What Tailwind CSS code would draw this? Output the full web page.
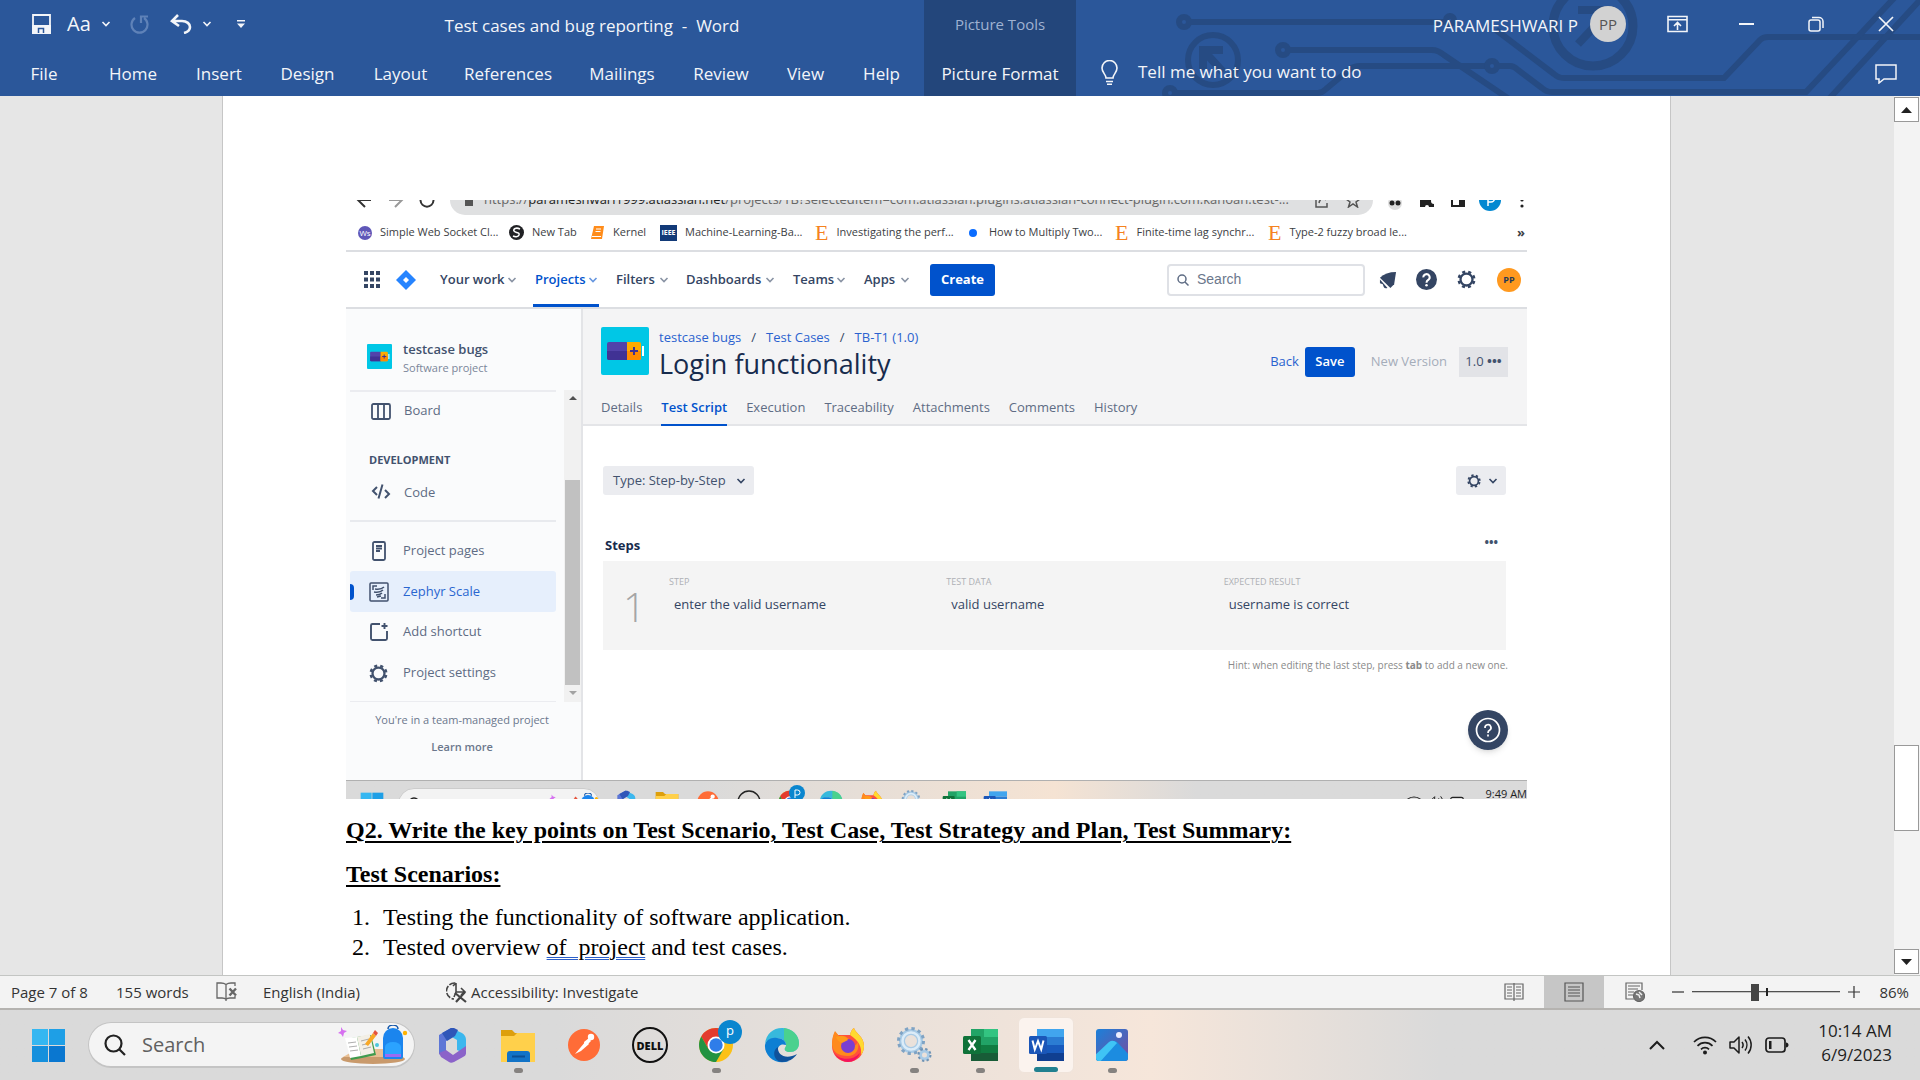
<!DOCTYPE html>
<html lang="en">
<head>
<meta charset="utf-8">
<title>Test cases and bug reporting - Word</title>
<script src="https://cdn.jsdelivr.net/npm/@tailwindcss/browser@4"></script>
</head>
<body class="flex h-screen flex-col overflow-hidden bg-[#e6e6e6] font-['Open_Sans','Noto_Sans',sans-serif] text-[16px] text-black">

<svg class="hidden" aria-hidden="true">
  <symbol id="chev" viewBox="0 0 10 10"><path d="M1.5 3l3.500 3.500L8.500 3" fill="none" stroke="currentColor" stroke-width="1.600"/></symbol>
  <symbol id="gear" viewBox="0 0 20 20"><circle cx="10" cy="10" r="6.300" fill="none" stroke="currentColor" stroke-width="2.400"/><circle cx="10" cy="10" r="8.200" fill="none" stroke="currentColor" stroke-width="2.600" stroke-dasharray="3.220 3.220" stroke-dashoffset="-1.600"/></symbol>
  <symbol id="battery" viewBox="0 0 48 48"><rect width="48" height="48" rx="2" fill="#00c7e6"/><rect x="6" y="15" width="21" height="18" rx="2" fill="#5243aa"/><path d="M6 24h21v9H8a2 2 0 0 1-2-2z" fill="#403294"/><path d="M26 15h12a2 2 0 0 1 2 2v14a2 2 0 0 1-2 2H26z" fill="#ffab00"/><path d="M26 24h14v7a2 2 0 0 1-2 2H26z" fill="#ff8b00"/><path d="M41 19h2v10h-2z" fill="#fff"/><path d="M33 20v8M29 24h8" stroke="#403294" stroke-width="2"/></symbol>
  <symbol id="edge" viewBox="0 0 36 36"><path d="M1 17C2 7 9 1 18 1c10 0 17 7 17 15 0 6-4 9-9 9-4 0-6-2-5-4 1-1 1-2 1-3 0-4-4-7-9-7C7 11 2 14 1 17z" fill="#37b9dc"/><path d="M20 1c9 1 15 8 15 15 0 6-4 9-9 9-4 0-6-2-5-4 2-3 1-6-1-8z" fill="#4fd77a" opacity=".8"/><path d="M1 18c1-5 6-8 12-7 5 0 9 3 9 7-6-2-9 2-8 7 1 6 6 9 11 9-13 5-25-5-24-16z" fill="#0d7fd3"/><path d="M14 20c-1 8 8 13 19 7-3 5-9 8-15 8-9-1-10-12-4-15z" fill="#10529b"/></symbol>
  <symbol id="office" viewBox="0 0 36 36"><path d="M17 1L5 8v19l7 4V14l9-6V2z" fill="#5c76d6"/><path d="M17 1l11 5c3 2 4 4 4 7v14l-9-4V13l-7-4z" fill="#3bb7ee"/><path d="M17 1L8 6l5 8 8-5 3-6-4-2z" fill="#2f56b8"/><path d="M5 26l7-3 7 5 13-9v7c0 2-1 3-3 4l-9 5c-2 1-4 1-5 0l-8-5z" fill="#8b63c9"/></symbol>
  <symbol id="folder" viewBox="0 0 36 36"><path d="M1 3h11l3 3h20v8H1z" fill="#dd9f0c"/><path d="M1 9h13l3-3h18v29H1z" fill="#ffd04b"/><path d="M7 35V27a3 3 0 0 1 3-3h17a3 3 0 0 1 3 3v8z" fill="#1173c7"/><path d="M12 29.500h13" stroke="#0a4f94" stroke-width="2"/></symbol>
  <symbol id="postman" viewBox="0 0 36 36"><circle cx="18" cy="18" r="16" fill="#ff6c37"/><path d="M9 27l11-13 3 3-8 7z" fill="#fff"/><circle cx="25" cy="10" r="3.200" fill="#fff"/><path d="M18 15l5-4 2 3-6 6z" fill="#fff"/></symbol>
  <symbol id="chrome" viewBox="0 0 36 36"><circle cx="18" cy="18" r="17" fill="#fbc116"/><path d="M18 1C12 1 6 4 3.300 9.500L10.600 22.300 18 10h15A17 17 0 0 0 18 1z" fill="#e33b2e"/><path d="M3.300 9.500A17 17 0 0 0 18 35l7.400-12.700H10.600z" fill="#229342"/><circle cx="18" cy="18" r="8.500" fill="#fff"/><circle cx="18" cy="18" r="6.700" fill="#2f7de9"/></symbol>
  <symbol id="firefox" viewBox="0 0 36 36"><path d="M20 8c1-4 2-6 4-7 1 5 10 8 10 18 0 9-7 16-16 16S2 28 2 19c0-6 1-10 3-14l3 3z" fill="#ff4f3d"/><path d="M20 8c1-4 2-6 4-7 1 5 10 8 10 18 0 4-1 6-3 9 1-8-2-14-11-20z" fill="#ffd930"/><path d="M2 18c0-6 1-10 3-14l4 5c4-1 7 0 10 3l-6 4c4 6 12 5 15-1 2 8-3 14-10 14C8 29 3 25 2 18z" fill="#ff8a1d"/><circle cx="18" cy="19" r="7" fill="#7a3fd1"/><path d="M6 10c5-2 10-1 12 3l-6 3c-3-1-5-3-6-6z" fill="#ff9a1a"/><path d="M3 24c4 9 19 11 27 2-2 6-7 9-12 9S6 31 3 24z" fill="#f4135f"/></symbol>
  <symbol id="gears" viewBox="0 0 36 36"><circle cx="15" cy="14" r="9" fill="none" stroke="#a9cbe6" stroke-width="6"/><circle cx="15" cy="14" r="12.500" fill="none" stroke="#7fa3c4" stroke-width="3" stroke-dasharray="3.300 3.250"/><circle cx="15" cy="14" r="8.500" fill="none" stroke="#dcecf8" stroke-width="2.500"/><circle cx="28.500" cy="28" r="4" fill="none" stroke="#a9cbe6" stroke-width="3"/><circle cx="28.500" cy="28" r="6" fill="none" stroke="#6f93b5" stroke-width="2" stroke-dasharray="2.350 2.360"/></symbol>
  <symbol id="excel" viewBox="0 0 36 36"><path d="M9 2h27v32H9z" fill="#21a366"/><path d="M22 2h14v8H22z" fill="#33c481"/><path d="M9 18h27v8H9z" fill="#107c41"/><path d="M9 26h27v8H9z" fill="#185c37"/><rect x="1" y="9" width="18" height="18" rx="1.500" fill="#0f7239"/><path d="M6.500 13l7 10M13.500 13l-7 10" stroke="#fff" stroke-width="2.300"/></symbol>
  <symbol id="word" viewBox="0 0 36 36"><path d="M9 2h27v8H9z" fill="#41a5ee"/><path d="M9 10h27v8H9z" fill="#2b7cd3"/><path d="M9 18h27v8H9z" fill="#185abd"/><path d="M9 26h27v8H9z" fill="#103f91"/><rect x="1" y="9" width="18" height="18" rx="1.500" fill="#1b56b8"/><path d="M4.500 13.500l2.300 9L10 14l3.200 8.500 2.300-9" fill="none" stroke="#fff" stroke-width="2"/></symbol>
  <symbol id="win" viewBox="0 0 36 36"><path d="M1 1h16.500v16.500H1z" fill="#35b7f1"/><path d="M18.500 1H35v16.500H18.500z" fill="#1e9fe6"/><path d="M1 18.500h16.500V35H1z" fill="#1590dd"/><path d="M18.500 18.500H35V35H18.500z" fill="#0a77d0"/></symbol>
  <symbol id="pack" viewBox="0 0 70 40"><ellipse cx="35" cy="34" rx="32" ry="5" fill="#c99a6c"/><path d="M5 32l14-8h32l14 8z" fill="#e8bf94"/><path d="M8 14l11-2 14-2 5 20-14 3-11 2z" fill="#3f9b4d"/><path d="M7 13l12-1 4 19-11 2z" fill="#fff"/><path d="M19 12l13-3 4 19-13 3z" fill="#f3efe6"/><path d="M10 18l8-1M11 22l8-1M12 26l8-1M23 16l8-2M24 20l8-2M25 24l8-2" stroke="#999" stroke-width=".8"/><path d="M27 19l8-11 3 3-8 10z" fill="#f9a825"/><path d="M35 8l2-3 3 3-2 3z" fill="#e5533d"/><path d="M3 2l2 3 4 1-3 2-1 4-2-3-3-1 3-2z" fill="#d670f0"/><path d="M50 4a5 4 0 0 1 10 0" fill="none" stroke="#1355a8" stroke-width="1.500"/><path d="M45 13a10 10 0 0 1 20 0v19a2 2 0 0 1-2 2H47a2 2 0 0 1-2-2z" fill="#1b85ee"/><path d="M47 22a8 5 0 0 1 16 0v9H47z" fill="#2ba3ff"/><path d="M47 29h16v3H47z" fill="#9b6bf2"/><circle cx="67" cy="8" r="2.200" fill="#ffb300"/><circle cx="39" cy="20" r="2" fill="#4cc6dd"/></symbol>
  <symbol id="wifi" viewBox="0 0 24 24"><g fill="none" stroke="currentColor" stroke-width="1.700"><path d="M1 9a15.500 15.500 0 0 1 22 0M4.500 12.800a10.600 10.600 0 0 1 15 0M8 16.300a5.700 5.700 0 0 1 8 0"/></g><circle cx="12" cy="19.500" r="2" fill="currentColor"/></symbol>
  <symbol id="sound" viewBox="0 0 24 24"><g fill="none" stroke="currentColor" stroke-width="1.500"><path d="M1 9h4l5-5v16l-5-5H1z" stroke-linejoin="round"/><path d="M13 9a5 5 0 0 1 0 6M16 6.500a9 9 0 0 1 0 11M19 3.500a13 13 0 0 1 0 17"/></g></symbol>
  <symbol id="power" viewBox="0 0 24 24"><rect x="1" y="5" width="19" height="14" rx="3" fill="none" stroke="currentColor" stroke-width="1.700"/><path d="M4 8h2.500v8H4z" fill="currentColor"/><path d="M21 9.500c1.500 0 2.500 1 2.500 2.500s-1 2.500-2.500 2.500z" fill="currentColor"/></symbol>
</svg>

<!-- Title bar and ribbon tabs -->
<header class="relative flex h-[96px] shrink-0 flex-col overflow-hidden bg-[#2b579a] text-[#f3f5f9]">
  <svg class="absolute top-0 right-0 h-[96px] w-[760px]" viewBox="1160 0 760 96" fill="none" stroke="#264b83" stroke-width="6" aria-hidden="true">
    <circle cx="1184" cy="22" r="5"/><path d="M1190 22H1444"/><circle cx="1450" cy="20" r="4"/>
    <path d="M1496 30l58 44q4 4 10 4h160l36-38q3-3 8-3h152"/>
    <circle cx="1283" cy="50" r="5"/><path d="M1289 50h143q6 0 12 5l68 46"/>
    <circle cx="1170" cy="93" r="5"/><path d="M1176 93h142q4 0 8-4l24-20q4-3 10-3h126"/><circle cx="1492" cy="66" r="5"/>
    <path d="M1498 66h12q4 0 8 4l24 18q4 4 10 4h254l90-96M1828 100l92-100"/>
    <circle cx="1213" cy="60" r="25"/><circle cx="1593" cy="26" r="40" stroke-width="9"/>
    <path d="M1203 70V50h20M1203 50l20 22M1578 10h32v30M1610 10l-32 34" stroke-width="8"/>
  </svg>
  <div class="relative flex h-[52px] items-stretch">
    <div class="flex flex-1 items-stretch">
      <div class="flex w-[260px] items-center pb-1 pl-8">
        <button class="w-[35px]" aria-label="Save"><svg class="h-5 w-[19px]" viewBox="0 0 19 20" fill="none" stroke="currentColor" stroke-width="1.800"><path d="M1 1h17v18H1z"/><path d="M1 12h17v7H1z" fill="currentColor"/><path d="M6.500 19v-4.500h5V19" stroke="#2b579a" stroke-width="1.500"/></svg></button>
        <button class="w-[34px] text-left text-[20px] leading-6">Aa</button>
        <button class="w-[29px]" aria-label="Font options"><svg class="size-[10px]"><use href="#chev"/></svg></button>
        <button class="w-10 text-[#5f82b8]" aria-label="Redo"><svg class="size-5" viewBox="0 0 20 20" fill="none" stroke="currentColor" stroke-width="2.200"><path d="M5 4a8 8 0 1 0 9 0M11 9V2.500h7"/></svg></button>
        <button class="w-[32px]" aria-label="Undo"><svg class="h-5 w-[22px]" viewBox="0 0 22 20" fill="none" stroke="currentColor" stroke-width="2.600"><path d="M8 1L2 7l7 5M3 7h9c5 0 8 3 8 6s-2 5-6 6"/></svg></button>
        <button class="w-[34px]" aria-label="Undo history"><svg class="size-[10px]"><use href="#chev"/></svg></button>
        <button aria-label="Customize quick access"><svg class="size-[10px]" viewBox="0 0 10 10" fill="currentColor"><path d="M1 1h8v1.500H1zM1 4.500h8L5 9z"/></svg></button>
      </div>
      <h1 class="flex flex-1 items-center justify-center text-[17px] whitespace-pre">Test cases and bug reporting  -  Word</h1>
    </div>
    <div class="flex w-[152px] items-center justify-center bg-[#23467b] pb-1 text-[15px] text-[#9fb2d2]">Picture Tools</div>
    <div class="flex w-[844px] items-center justify-end pb-1">
      <span class="mr-3 pt-1 text-[17px]">PARAMESHWARI P</span>
      <span class="flex size-9 items-center justify-center rounded-full bg-[#d2d2d2] text-[15px] text-[#555]">PP</span>
      <button class="ml-[41px] w-[71px]" aria-label="Ribbon display options"><svg class="h-[18px] w-[21px]" viewBox="0 0 21 18" fill="none" stroke="currentColor" stroke-width="1.600"><path d="M1 1.500h19v15H1zM1 4.800h19M10.500 15V8M7 11l3.500-3.500L14 11"/></svg></button>
      <button class="w-[70px]" aria-label="Minimize"><svg class="h-4 w-[17px]" viewBox="0 0 17 16" stroke="currentColor" stroke-width="2"><path d="M1 8h15"/></svg></button>
      <button class="w-[70px]" aria-label="Restore"><svg class="size-4" viewBox="0 0 16 16" fill="none" stroke="currentColor" stroke-width="1.500"><rect x="1" y="4" width="11" height="11" rx="2"/><path d="M4 1.500h7a4 4 0 0 1 4 4V12"/></svg></button>
      <button class="mr-[26px]" aria-label="Close"><svg class="size-4" viewBox="0 0 16 16" stroke="currentColor" stroke-width="1.700"><path d="M1 1l14 14M15 1L1 15"/></svg></button>
    </div>
  </div>
  <nav class="relative flex h-[44px] items-stretch text-[17px]">
    <button class="w-[88px] pb-px">File</button>
    <button class="w-[90px] pb-px">Home</button>
    <button class="w-[82px] pb-px">Insert</button>
    <button class="w-[95px] pb-px">Design</button>
    <button class="w-[91px] pb-px">Layout</button>
    <button class="w-[124px] pb-px">References</button>
    <button class="w-[104px] pb-px">Mailings</button>
    <button class="w-[94px] pb-px">Review</button>
    <button class="w-[75px] pb-px">View</button>
    <button class="w-[81px] pr-1 pb-px">Help</button>
    <button class="w-[152px] bg-[#23467b] pb-px">Picture Format</button>
    <button class="flex items-center gap-5 pb-1 pl-[25px]"><svg class="h-[25px] w-[17px]" viewBox="0 0 17 25" fill="none" stroke="currentColor" stroke-width="1.600"><path d="M5 18c0-4-4-5-4-10a7.500 7.500 0 0 1 15 0c0 5-4 6-4 10zM5 21.500h7M6 24.200h5"/></svg>Tell me what you want to do</button>
    <button class="mr-[23px] ml-auto" aria-label="Comments"><svg class="h-5 w-[22px]" viewBox="0 0 22 20" fill="none" stroke="currentColor" stroke-width="1.500"><path d="M1 1h20v14H9l-5 4v-4H1z"/></svg></button>
  </nav>
</header>

<!-- Document area -->
<main class="flex min-h-0 flex-1">
  <div class="min-w-0 flex-1 overflow-hidden pr-[223px] pl-[222px]">
    <article class="h-full border-x border-[#c6c6c6] bg-white pt-[104px] pr-[143px] pl-[123px] font-['Liberation_Serif',serif]">

      <!-- Embedded browser capture -->
      <section class="flex h-[599px] flex-col overflow-hidden font-['Open_Sans','Noto_Sans',sans-serif] text-[13px] text-[#42526e]">
        <div class="flex h-[15px] shrink-0 items-end overflow-hidden pl-[10px] text-[#333]">
          <svg class="h-[30px] w-[94px] shrink-0" viewBox="0 0 94 30" fill="none" stroke="#333" stroke-width="2"><path d="M2 15h13M9 8l-7 7 7 7"/><path d="M33 15h12M39 8l7 7-7 7" stroke="#999"/><path d="M66 11a6.500 6.500 0 1 0 10 0"/></svg>
          <div class="flex h-[30px] flex-1 items-center overflow-hidden rounded-full bg-[#dfe0e1] pl-[15px] text-[#666]">
            <span class="mr-[11px] h-3 w-2 shrink-0 bg-[#555]"></span>
            <span class="flex-1 whitespace-nowrap text-[13px]">https://<span class="text-[#222]">parameshwari1999.atlassian.net</span>/projects/TB?selectedItem=com.atlassian.plugins.atlassian-connect-plugin.com.kanoah.test-...</span>
            <svg class="mr-3 h-4 w-[46px] shrink-0" viewBox="0 0 46 16" fill="none" stroke="#555" stroke-width="1.500"><path d="M1 4v11h11v-4M4 11c1-5 4-6 8-6M10 2l3 3-3 3"/><path d="M38 2l2 4.500 5 .5-4 3 1.500 5-4.500-3-4.500 3L35 10l-4-3 5-.5z"/></svg>
          </div>
          <svg class="h-[30px] w-[154px] shrink-0" viewBox="0 0 154 30"><circle cx="22" cy="18" r="7" fill="#ddd"/><circle cx="19" cy="18" r="2.500" fill="#222"/><circle cx="25" cy="18" r="2.500" fill="#222"/><path d="M47 9h4a3 3 0 0 1 6 0h4v4a3 3 0 0 0 0 6v3h-5a2 2 0 0 0-4 0h-5z" fill="#222"/><path d="M79 8h12v13H79z" fill="none" stroke="#222" stroke-width="2"/><path d="M86 8h5v13h-5z" fill="#222"/><circle cx="117" cy="15" r="11" fill="#0288d1"/><path d="M115 21V10h3a3 3 0 0 1 0 7h-3" fill="none" stroke="#fff" stroke-width="1.500"/><circle cx="149" cy="15" r="1.600" fill="#222"/><circle cx="149" cy="21" r="1.600" fill="#222"/></svg>
        </div>
        <nav class="flex h-[35px] shrink-0 items-center text-[11px] text-[#3c4043]">
          <a href="#" class="flex w-[154px] items-center gap-2 pl-3"><span class="size-[14px] rounded-full bg-[#5f57b8] text-center text-[8px] leading-[14px] text-white">Ws</span>Simple Web Socket Cl...</a>
          <a href="#" class="flex w-[81px] items-center gap-2 pl-[9px]"><svg class="size-[15px]" viewBox="0 0 15 15"><circle cx="7.500" cy="7.500" r="7.500" fill="#202124"/><path d="M11 4c-4-2-7 0-6 2s6 1 5 4c-1 2-4 2-6 1" fill="none" stroke="#fff" stroke-width="1.600"/></svg>New Tab</a>
          <a href="#" class="flex w-[71px] items-center gap-2 pl-[9px]"><svg class="size-[15px]" viewBox="0 0 15 15"><path d="M4 1h10l-2 13H1z" fill="#ff8c1a"/><path d="M6 4h5M5.500 6.500h5M2 11.500h9" stroke="#fff"/></svg>Kernel</a>
          <a href="#" class="flex w-[153px] items-center gap-2 pl-2"><span class="h-4 w-[17px] bg-[#123a78] text-center text-[7px] leading-4 font-bold text-white">IEEE</span>Machine-Learning-Ba...</a>
          <a href="#" class="flex w-[157px] items-center gap-2 pl-[10px]"><span class="font-['Liberation_Serif',serif] text-[22px] leading-5 text-[#f58220]">E</span>Investigating the perf...</a>
          <a href="#" class="flex w-[144px] items-center gap-3 pl-[7px]"><span class="size-2 rounded-full bg-[#0a6cff]"></span>How to Multiply Two...</a>
          <a href="#" class="flex w-[153px] items-center gap-2 pl-[9px]"><span class="font-['Liberation_Serif',serif] text-[22px] leading-5 text-[#f58220]">E</span>Finite-time lag synchr...</a>
          <a href="#" class="flex items-center gap-2 pl-[9px]"><span class="font-['Liberation_Serif',serif] text-[22px] leading-5 text-[#f58220]">E</span>Type-2 fuzzy broad le...</a>
          <span class="ml-auto pr-[2px] text-[13px] font-bold">»</span>
        </nav>

        <div class="flex h-[59px] shrink-0 items-stretch border-t-2 border-b-2 border-[#dcdee2] text-[13px] font-semibold text-[#344563]">
          <div class="flex w-[94px] items-center gap-4 pl-[18px]">
            <svg class="h-[17px] w-4" viewBox="0 0 16 17" fill="#344563"><path d="M0 0h4v4H0zM6 0h4v4H6zM12 0h4v4h-4zM0 6.500h4v4H0zM6 6.500h4v4H6zM12 6.500h4v4h-4zM0 13h4v4H0zM6 13h4v4H6zM12 13h4v4h-4z"/></svg>
            <svg class="size-5" viewBox="0 0 20 20"><path d="M10 0l10 10-10 10L0 10z" fill="#2684ff"/><path d="M10 7l3 3-3 3-3-3z" fill="#fff"/></svg>
          </div>
          <a href="#" class="flex w-[93px] items-center justify-between pr-4"><span>Your work</span><svg class="size-[10px] text-[#8993a4]"><use href="#chev"/></svg></a>
          <a href="#" class="flex w-[66px] items-center justify-between border-b-3 border-[#0052cc] pt-[3px] pr-[1px] pl-[2px] text-[#0052cc]"><span>Projects</span><svg class="size-[10px] opacity-60"><use href="#chev"/></svg></a>
          <a href="#" class="ml-[17px] flex w-[53px] items-center justify-between"><span>Filters</span><svg class="size-[10px] text-[#8993a4]"><use href="#chev"/></svg></a>
          <a href="#" class="ml-[17px] flex w-[89px] items-center justify-between"><span>Dashboards</span><svg class="size-[10px] text-[#8993a4]"><use href="#chev"/></svg></a>
          <a href="#" class="ml-[18px] flex w-[53px] items-center justify-between"><span>Teams</span><svg class="size-[10px] text-[#8993a4]"><use href="#chev"/></svg></a>
          <a href="#" class="ml-[18px] flex w-[46px] items-center justify-between"><span>Apps</span><svg class="size-[10px] text-[#8993a4]"><use href="#chev"/></svg></a>
          <button class="ml-5 h-8 w-[65px] self-center rounded-[3px] bg-[#0052cc] font-bold text-white">Create</button>
          <label class="mr-[14px] ml-auto flex h-8 w-[198px] items-center gap-2 self-center rounded-[4px] border-2 border-[#dfe1e6] pl-2 font-normal"><svg class="size-3" viewBox="0 0 12 12" fill="none" stroke="#5e6c84" stroke-width="1.500"><circle cx="5" cy="5" r="4"/><path d="M8 8l3.500 3.500"/></svg><input type="text" aria-label="Search" placeholder="Search" class="w-32 font-['Liberation_Sans',sans-serif] text-[14px] outline-none placeholder:text-[#6b778c]"></label>
          <svg class="mr-[19px] size-[18px] self-center" viewBox="0 0 19 19" fill="#344563"><path d="M18 1L16 14l-4 4L1 7q6-6 17-6z"/><path d="M1 9l8 9q-3 1-4-1l-1-3-3-1z"/></svg>
          <svg class="mr-5 size-[21px] self-center" viewBox="0 0 20 20"><circle cx="10" cy="10" r="10" fill="#344563"/><path d="M7 8a3 3 0 1 1 4.500 2.500Q10 11.200 10 13" fill="none" stroke="#fff" stroke-width="1.900"/><circle cx="10" cy="15.500" r="1.200" fill="#fff"/></svg>
          <svg class="mr-[21px] size-[19px] self-center text-[#344563]"><use href="#gear"/></svg>
          <span class="mr-[6px] flex size-6 items-center justify-center self-center rounded-full bg-[#ff991f] text-[9px] font-bold text-[#253858]">PP</span>
        </div>

        <div class="flex h-[471px] shrink-0 items-stretch">
          <aside class="flex w-[237px] flex-col border-r-2 border-[#e3e4e7] bg-[#fafbfc]">
            <div class="mr-[25px] ml-1 flex h-[83px] items-center gap-[11px] border-b-2 border-[#ebecf0] pt-[14px] pl-[17px]">
              <svg class="size-[25px]"><use href="#battery"/></svg>
              <div class="pt-[2px]"><p class="text-[13px] leading-5 font-semibold">testcase bugs</p><p class="text-[11px] leading-[18px] text-[#7a869a]">Software project</p></div>
            </div>
            <div class="-mt-[2px] flex h-[312px] items-stretch">
              <ul class="flex w-[210px] flex-col pl-1 text-[13px] text-[#5e6c84]">
                <li><a href="#" class="flex h-[42px] items-center gap-[13px] pl-[21px]"><svg class="h-[17px] w-5" viewBox="0 0 20 17" fill="none" stroke="#42526e" stroke-width="1.800"><rect x="1" y="1" width="18" height="15" rx="1.500"/><path d="M7 1v15M13 1v15"/></svg>Board</a></li>
                <li class="flex h-[42px] items-end pb-1 pl-[19px] text-[11px] leading-5 font-bold text-[#42526e]">DEVELOPMENT</li>
                <li><a href="#" class="flex h-[46px] items-start gap-[13px] pt-[9px] pl-[21px] leading-[18px]"><svg class="h-[18px] w-5" viewBox="0 0 20 18" fill="none" stroke="#42526e" stroke-width="2"><path d="M6 4L2 8l4 4M14 7l4 4-4 4M11.500 1.500l-4 14"/></svg>Code</a></li>
                <li class="border-t-2 border-[#e8eaee]"><a href="#" class="flex h-[49px] items-center gap-[17px] pt-[9px] pl-[22px]"><svg class="h-5 w-[14px]" viewBox="0 0 14 20" fill="none" stroke="#42526e" stroke-width="1.800"><rect x="1" y="1" width="12" height="18" rx="1.500"/><path d="M4 5h6M4 7.500h6M4 10h4"/></svg>Project pages</a></li>
                <li><a href="#" class="flex h-[41px] items-center rounded-[3px] bg-[#e6effc] text-[#2a66d0]"><span class="h-4 w-1 rounded-r-sm bg-[#0052cc]"></span><svg class="mr-[14px] ml-[15px] size-5" viewBox="0 0 20 20" fill="none" stroke="#42526e" stroke-width="1.500"><rect x="1" y="1" width="18" height="18" rx="1"/><path d="M4 8V4h4M16 12v4h-4M15 5q-3 3-9 2M14 8q-3 3-9 2M13 11q-2 2-6 2M12 14l-4 1"/></svg>Zephyr Scale</a></li>
                <li><a href="#" class="flex h-10 items-center gap-[15px] pl-[20px]"><svg class="size-[18px]" viewBox="0 0 18 18" fill="none" stroke="#42526e" stroke-width="1.900"><path d="M10 1H2.500A1.500 1.500 0 0 0 1 2.500v13A1.500 1.500 0 0 0 2.500 17h13a1.500 1.500 0 0 0 1.500-1.500V8M14.500 0v6M11.500 3h6"/></svg>Add shortcut</a></li>
                <li><a href="#" class="flex h-[42px] items-center gap-[15px] pl-[19px]"><svg class="size-[19px] text-[#42526e]"><use href="#gear"/></svg>Project settings</a></li>
                <li class="grow border-b border-[#ebecf0]"></li>
              </ul>
              <div class="ml-2 flex w-[17px] flex-col items-center bg-[#f1f1f1]">
                <svg class="my-[6px] h-1 w-[8px]" viewBox="0 0 8 4"><path d="M0 4l4-4 4 4z" fill="#505050"/></svg>
                <div class="mt-[74px] h-[205px] w-[15px] bg-[#c1c1c1]"></div>
                <svg class="mt-[6px] h-1 w-[8px]" viewBox="0 0 8 4"><path d="M0 0l4 4 4-4z" fill="#a3a3a3"/></svg>
              </div>
            </div>
            <div class="flex flex-col items-center pt-1 pr-[3px] text-[11px] text-[#6b778c]">
              <p class="leading-7">You're in a team-managed project</p>
              <a href="#" class="leading-[26px] font-semibold">Learn more</a>
            </div>
          </aside>

          <div class="flex min-w-0 flex-1 flex-col bg-white">
            <div class="flex h-[117px] flex-col justify-between border-b-2 border-[#e4e5e8] bg-[#f4f4f5] pl-[18px]">
              <div class="flex pt-[18px] pr-[19px]">
                <svg class="mr-[10px] size-12 shrink-0"><use href="#battery"/></svg>
                <div>
                  <p class="flex gap-[10px] text-[13px] leading-5 text-[#2a62cf]"><a href="#">testcase bugs</a><span class="text-[#344563]">/</span><a href="#">Test Cases</a><span class="text-[#344563]">/</span><a href="#">TB-T1 (1.0)</a></p>
                  <h2 class="text-[27px] leading-[34px] font-medium text-[#172b4d]">Login functionality</h2>
                </div>
                <div class="mt-5 ml-auto flex h-[30px] items-stretch text-[13px]">
                  <a href="#" class="mr-[6px] self-center text-[#2a62cf]">Back</a>
                  <button class="mr-4 w-[50px] rounded-[3px] bg-[#0052cc] font-semibold text-white">Save</button>
                  <button class="mr-3 text-[#a5adba]" disabled>New Version</button>
                  <button class="w-[49px] bg-[#e2e3e7]">1.0 <b>•••</b></button>
                </div>
              </div>
              <div class="-mb-[2px] flex items-stretch gap-[19px] text-[13px] leading-[34px] text-[#5e6c84]">
                <a href="#">Details</a>
                <a href="#" class="border-b-2 border-[#0052cc] font-semibold text-[#0052cc]">Test Script</a>
                <a href="#">Execution</a>
                <a href="#">Traceability</a>
                <a href="#">Attachments</a>
                <a href="#">Comments</a>
                <a href="#">History</a>
              </div>
            </div>
            <div class="flex flex-col pt-[40px] pr-[21px] pl-5">
              <div class="flex h-[29px] items-stretch justify-between">
                <button class="flex w-[151px] items-center justify-between rounded-[3px] bg-[#ebecf0] pr-2 pl-[10px]">Type: Step-by-Step <svg class="size-[10px] text-[#344563]"><use href="#chev"/></svg></button>
                <button class="flex w-[50px] items-center justify-between rounded-[3px] bg-[#ebecf0] pr-2 pl-[11px] text-[#344563]" aria-label="Settings"><svg class="size-[14px]"><use href="#gear"/></svg><svg class="size-[10px]"><use href="#chev"/></svg></button>
              </div>
              <div class="mt-10 flex h-[26px] items-start justify-between pr-2 pl-[2px] leading-5"><h3 class="text-[13px] font-bold text-[#172b4d]">Steps</h3><span class="text-[12px] leading-4 font-bold">•••</span></div>
              <div class="flex h-[89px] bg-[#f4f4f4] pt-[14px] pr-[5px] text-[13px] text-[#344563]">
                <span class="w-[66px] pt-[10px] pl-5 text-[40px] leading-[44px] font-light text-[#a5a5a5]">1</span>
                <dl class="grid flex-1 grid-cols-3 leading-[14px]">
                  <div><dt class="text-[9px] text-[#aeb0b4]">STEP</dt><dd class="pt-[5px] pl-[5px] leading-5">enter the valid username</dd></div>
                  <div><dt class="text-[9px] text-[#aeb0b4]">TEST DATA</dt><dd class="pt-[5px] pl-[5px] leading-5">valid username</dd></div>
                  <div><dt class="text-[9px] text-[#aeb0b4]">EXPECTED RESULT</dt><dd class="pt-[5px] pl-[5px] leading-5">username is correct</dd></div>
                </dl>
              </div>
              <p class="-mr-[2px] pt-[5px] text-right text-[10px] leading-5 text-[#8a8a8a]">Hint: when editing the last step, press <b>tab</b> to add a new one.</p>
              <button class="-mr-[2px] mt-[35px] self-end rounded-full shadow-md" aria-label="Help"><svg class="size-10" viewBox="0 0 40 40" fill="none" stroke="#fff" stroke-width="1.700"><circle cx="20" cy="20" r="20" fill="#344563" stroke="none"/><circle cx="20" cy="20" r="11.500"/><path d="M17 18a3 3 0 1 1 4.500 2.300Q20 21 20 23M20 24.500v2"/></svg></button>
            </div>
          </div>
        </div>

        <div class="flex h-[19px] shrink-0 items-start overflow-hidden border-t border-[#b0b0b0] bg-linear-to-r from-[#dadada] from-30% via-[#f5e3d3] via-60% to-[#dadada] to-72% text-[#222]">
          <svg class="mt-[11px] ml-[14px] size-6 shrink-0"><use href="#win"/></svg>
          <div class="mt-[7px] ml-[14px] flex h-8 w-[202px] shrink-0 items-start rounded-full border border-[#ccc] bg-[#f3f3f3] pt-[8px] pl-2"><svg class="mr-2 size-4 shrink-0" viewBox="0 0 16 16" fill="none" stroke="#222" stroke-width="1.500"><circle cx="7" cy="6" r="5"/></svg><span class="text-[12px] leading-4 text-[#555]">Search</span><svg class="-mt-1 ml-auto h-7 w-[50px]"><use href="#pack"/></svg></div>
          <div class="mt-[9px] ml-[14px] flex shrink-0 gap-[17px]">
            <svg class="size-6"><use href="#office"/></svg><svg class="size-6"><use href="#folder"/></svg><svg class="size-6"><use href="#postman"/></svg><svg class="size-6" viewBox="0 0 24 24"><circle cx="12" cy="12" r="11" fill="none" stroke="#222" stroke-width="1.500"/></svg><svg class="size-6 overflow-visible" viewBox="0 0 24 24"><use href="#chrome" width="24" height="24"/><circle cx="19" cy="3" r="8" fill="#0a86cf"/><path d="M17 8V0h2.500a2 2 0 0 1 0 5H17" fill="none" stroke="#fff"/></svg><svg class="size-6"><use href="#edge"/></svg><svg class="size-6"><use href="#firefox"/></svg><svg class="size-6"><use href="#gears"/></svg><svg class="size-6"><use href="#excel"/></svg><svg class="size-6"><use href="#word"/></svg>
          </div>
          <div class="mt-[13px] ml-auto flex gap-[6px]"><svg class="size-4"><use href="#wifi"/></svg><svg class="size-4"><use href="#sound"/></svg><svg class="size-4"><use href="#power"/></svg></div>
          <span class="mt-[5px] ml-[20px] text-[11px] leading-4">9:49 AM</span>
        </div>
      </section>

      <h2 class="pt-[15px] text-[24px] leading-8 font-bold underline decoration-2 underline-offset-[3px]">Q2. Write the key points on Test Scenario, Test Case, Test Strategy and Plan, Test Summary:</h2>
      <h2 class="pt-3 text-[24px] leading-8 font-bold underline decoration-2 underline-offset-[3px]">Test Scenarios:</h2>
      <ol class="pt-3 pl-[6px] text-[24px] leading-[30px]">
        <li class="flex"><span class="w-[31px]">1.</span><span>Testing the functionality of software application.</span></li>
        <li class="flex"><span class="w-[31px]">2.</span><span>Tested overview <span class="whitespace-pre underline decoration-[#2b5fc9] decoration-double decoration-1 underline-offset-2">of  project</span> and test cases.</span></li>
      </ol>
    </article>
  </div>

  <div class="flex w-[26px] flex-col bg-[#f3f3f3] pr-[1px]">
    <button class="mt-[1px] flex h-[25px] items-center justify-center border border-[#999] bg-white" aria-label="Scroll up"><svg class="h-[6px] w-[11px]" viewBox="0 0 11 6"><path d="M0 6l5.500-6L11 6z" fill="#222"/></svg></button>
    <div class="grow-[623]"></div>
    <div class="h-[86px] border border-[#999] bg-white"></div>
    <div class="grow-[118]"></div>
    <button class="mb-[1px] flex h-[25px] items-center justify-center border border-[#999] bg-white" aria-label="Scroll down"><svg class="h-[6px] w-[11px]" viewBox="0 0 11 6"><path d="M0 0l5.500 6L11 0z" fill="#222"/></svg></button>
  </div>
</main>

<!-- Status bar -->
<div class="flex h-[33px] shrink-0 items-stretch border-t border-[#c3c5c3] bg-[#f3f3f3] text-[15px] text-[#333]">
  <button class="w-[105px] pl-[11px] text-left">Page 7 of 8</button>
  <button class="w-[111px] pl-[11px] text-left">155 words</button>
  <button class="w-[47px]" aria-label="Proofing"><svg class="h-5 w-[22px]" viewBox="0 0 22 20" fill="none" stroke="#666" stroke-width="1.300"><path d="M10 2.500Q8 1 5 1H1v15h5q3 0 4 1.500Q11 16 14 16h5v-2M10 2.500V19M10 2.500Q12 1 15 1h4v3"/><path d="M13.500 6.500l6.500 7M20 6.500l-6.500 7" stroke-width="2.400"/></svg></button>
  <button class="w-[183px] text-left">English (India)</button>
  <button class="flex items-center gap-[3px]"><svg class="h-[22px] w-[22px]" viewBox="0 0 22 22" fill="none" stroke="#444" stroke-width="1.600"><path d="M9 2a8 8 0 0 0-1 16" stroke-dasharray="6 1.500"/><path d="M10 2v9h8M7 5l3-3M15 7l4 4-4 3M10 11l-2 5"/><path d="M9 12l11 9M19 11l-9 10" stroke-width="2.200"/></svg>Accessibility: Investigate</button>
  <div class="ml-auto flex items-stretch">
    <button class="w-[60px]" aria-label="Read mode"><svg class="mx-auto size-5" viewBox="0 0 20 20" fill="none" stroke="#666" stroke-width="1.200"><path d="M10 2H1v15h9M10 2h9v15h-9M10 1v18M3 5h5M3 8h5M3 11h5M3 14h5M12 5h5M12 8h5M12 11h5M12 14h5"/></svg></button>
    <button class="w-[60px] bg-[#c6c6c6]" aria-label="Print layout"><svg class="mx-auto size-5" viewBox="0 0 20 20" fill="none" stroke="#555" stroke-width="1.200"><path d="M1 1h18v18H1zM4 5h12M4 8h12M4 11h12M4 14h12"/></svg></button>
    <button class="w-[62px]" aria-label="Web layout"><svg class="mx-auto size-5" viewBox="0 0 20 20" fill="none" stroke="#666" stroke-width="1.200"><path d="M9 17H1V1h16v7M3 4h12M3 7h10M3 10h6M3 13h5"/><circle cx="14" cy="14" r="5.500" fill="#777"/><path d="M11 12l3 1 1 3M14 10l3 3" stroke="#eee" stroke-width="1.500"/></svg></button>
    <button class="flex w-[26px] items-center pl-[6px]" aria-label="Zoom out"><svg class="size-3" viewBox="0 0 12 12" stroke="#333" stroke-width="1.200"><path d="M0 6h12"/></svg></button>
    <div class="relative flex w-[148px] items-center">
      <input type="range" min="0" max="200" value="84" aria-label="Zoom" class="h-[18px] w-full appearance-none bg-linear-to-b from-transparent from-45% via-[#222] via-45% to-transparent to-55% [&::-webkit-slider-thumb]:h-[17px] [&::-webkit-slider-thumb]:w-2 [&::-webkit-slider-thumb]:appearance-none [&::-webkit-slider-thumb]:bg-[#444]">
      <span class="absolute top-[12px] left-1/2 h-2 w-[2px] bg-[#222]"></span>
    </div>
    <button class="flex w-[38px] items-center pl-2" aria-label="Zoom in"><svg class="size-3" viewBox="0 0 12 12" stroke="#333" stroke-width="1.200"><path d="M0 6h12M6 0v12"/></svg></button>
    <button class="w-[42px] pr-[11px] text-right">86%</button>
  </div>
</div>

<!-- Taskbar -->
<footer class="flex h-[72px] shrink-0 items-center border-t-2 border-[#b5b3b0] bg-linear-to-r from-[#dadada] from-29% via-[#f6e6da] via-60% to-[#dadada] to-75%">
  <button class="ml-[31px] size-[35px]" aria-label="Start"><svg class="size-[35px]"><use href="#win"/></svg></button>
  <label class="ml-[22px] flex h-[46px] w-[327px] items-center rounded-full border border-b-2 border-[#c4c4c4] bg-[#f4f4f4] pr-[6px] pl-[15px]">
    <svg class="mr-4 size-[22px] shrink-0" viewBox="0 0 22 22" fill="none" stroke="#222" stroke-width="2.200"><circle cx="9.500" cy="9.500" r="8"/><path d="M15 15l6 6"/></svg>
    <input type="text" placeholder="Search" aria-label="Search" class="min-w-0 flex-1 text-[20px] outline-none placeholder:text-[#606060]">
    <svg class="h-10 w-[70px] shrink-0"><use href="#pack"/></svg>
  </label>
  <nav class="ml-[4px] flex items-stretch">
    <button class="flex h-[56px] w-[66px] items-center justify-center" aria-label="Microsoft 365"><svg class="size-9"><use href="#office"/></svg></button>
    <button class="relative flex h-[56px] w-[66px] items-center justify-center" aria-label="File Explorer"><svg class="size-9"><use href="#folder"/></svg><span class="absolute bottom-0 h-[5px] w-[9px] rounded-full bg-[#858280]"></span></button>
    <button class="flex h-[56px] w-[66px] items-center justify-center" aria-label="Postman"><svg class="size-9"><use href="#postman"/></svg></button>
    <button class="flex h-[56px] w-[66px] items-center justify-center"><span class="flex size-9 items-center justify-center rounded-full border-2 border-[#111] text-[11px] leading-none font-extrabold text-[#111]">DELL</span></button>
    <button class="relative flex h-[56px] w-[66px] items-center justify-center" aria-label="Chrome"><svg class="size-9"><use href="#chrome"/></svg><span class="absolute top-[3px] right-[7px] flex size-6 items-center justify-center rounded-full bg-[#0a86cf] pb-[2px] text-[13px] text-white">p</span><span class="absolute bottom-0 h-[5px] w-[9px] rounded-full bg-[#858280]"></span></button>
    <button class="flex h-[56px] w-[66px] items-center justify-center" aria-label="Edge"><svg class="size-9"><use href="#edge"/></svg></button>
    <button class="flex h-[56px] w-[66px] items-center justify-center" aria-label="Firefox"><svg class="size-9"><use href="#firefox"/></svg></button>
    <button class="relative flex h-[56px] w-[66px] items-center justify-center" aria-label="Services"><svg class="size-9"><use href="#gears"/></svg><span class="absolute bottom-0 h-[5px] w-[9px] rounded-full bg-[#858280]"></span></button>
    <button class="relative flex h-[56px] w-[66px] items-center justify-center" aria-label="Excel"><svg class="size-9"><use href="#excel"/></svg><span class="absolute bottom-0 h-[5px] w-[9px] rounded-full bg-[#858280]"></span></button>
    <button class="relative mx-[5px] flex h-[56px] w-[56px] items-center justify-center rounded-md border border-[#efe3da] bg-[#fbf3ee]" aria-label="Word"><svg class="size-9"><use href="#word"/></svg><span class="absolute bottom-0 h-[5px] w-6 rounded-full bg-[#21808f]"></span></button>
    <button class="relative flex h-[56px] w-[66px] items-center justify-center" aria-label="Photos"><svg class="size-9" viewBox="0 0 36 36"><defs><linearGradient id="ph" x1="0" y1="0" x2="1" y2="1"><stop offset="0" stop-color="#1583dd"/><stop offset="1" stop-color="#7c4a9c"/></linearGradient><clipPath id="phc"><rect x="2" y="2" width="32" height="32" rx="3"/></clipPath></defs><g clip-path="url(#phc)"><path d="M0 0h36v36H0z" fill="url(#ph)"/><path d="M0 30l17-15q3-2 6 0l13 14v7H0z" fill="#1c8ce0"/><path d="M0 29l15-14q4-3 8 1L5 36H0z" fill="#3fc4f5"/></g><circle cx="25" cy="8" r="3" fill="#eef"/></svg><span class="absolute bottom-0 h-[5px] w-[9px] rounded-full bg-[#858280]"></span></button>
  </nav>
  <div class="ml-auto flex items-center text-[#1d1d1d]">
    <button class="mr-[28px]" aria-label="Hidden icons"><svg class="h-[10px] w-4" viewBox="0 0 16 10" fill="none" stroke="currentColor" stroke-width="2"><path d="M1 9l7-7 7 7"/></svg></button>
    <button class="mr-[25px] flex gap-3" aria-label="System tray"><svg class="size-6"><use href="#wifi"/></svg><svg class="size-6"><use href="#sound"/></svg><svg class="size-6"><use href="#power"/></svg></button>
    <div class="w-[78px] pb-1 text-right text-[17px] leading-6 whitespace-nowrap"><p>10:14 AM</p><p>6/9/2023</p></div>
    <span class="w-7"></span>
  </div>
</footer>
</body>
</html>
